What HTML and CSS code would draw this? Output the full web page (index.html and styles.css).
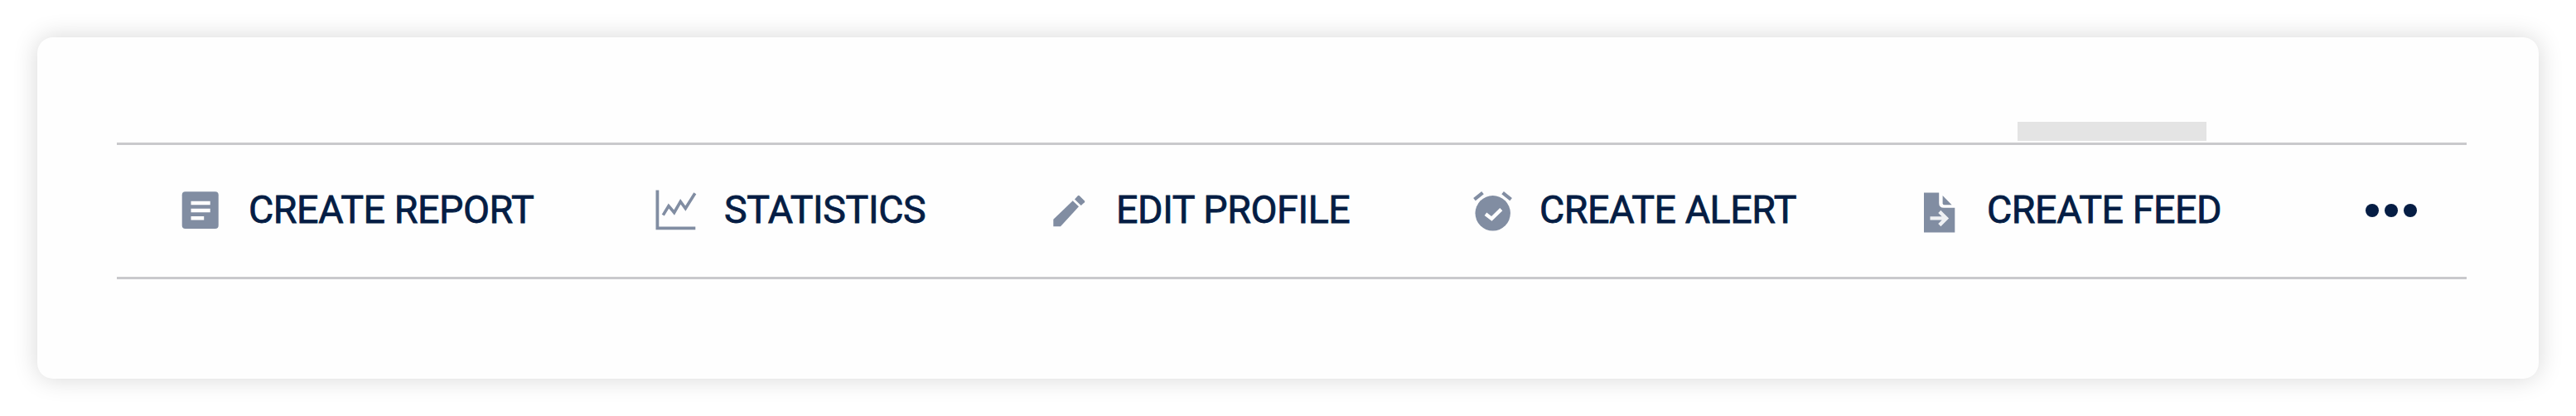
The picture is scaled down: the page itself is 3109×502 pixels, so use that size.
FILE: index.html
```html
<!DOCTYPE html>
<html lang="en">
    <head>
        <meta charset="utf-8">
        <title>Actions</title>
        <link rel="stylesheet" href="styles.css">
    </head>

    <body>

        <div class="card">
            <div class="toolbar">

                <div class="placeholder"></div>

                <div class="action report">
                    <svg class="icon" viewBox="0 0 60 60">
                        <rect x="7.7" y="7.3" width="44" height="44.7" rx="4"/>
                        <path class="cut" d="M18.5 18.7h23.2v4.5H18.5zM18.5 27.8h23.2v4.5H18.5zM18.5 37h15.7v4.5H18.5z"/>
                    </svg>
                    <span class="label">CREATE REPORT</span>
                </div>

                <div class="action statistics">
                    <svg class="icon" viewBox="0 0 60 60">
                        <path d="M9.5 5.5h3.8v44h44v3.8H9.5z"/>
                        <polyline class="line" points="18.3,35.6 25,24.5 31.7,32.5 39.3,19.3 45.3,27.5 56.8,9.2"/>
                    </svg>
                    <span class="label">STATISTICS</span>
                </div>

                <div class="action edit">
                    <svg class="icon" viewBox="0 0 60 60">
                        <path d="M9.3 40.8L32.7 18.3L40 25.3L18 49.3H9.3z"/>
                        <path d="M35 16.5L38.8 12.2Q39.8 11.2 40.8 12.2L46.8 18.2Q47.8 19.3 46.8 20.3L42.7 24z"/>
                    </svg>
                    <span class="label">EDIT PROFILE</span>
                </div>

                <div class="action alert">
                    <svg class="icon" viewBox="0 0 60 60">
                        <circle cx="29.7" cy="33.3" r="21.2"/>
                        <path class="line ear" d="M7.5 16.7L17.5 8.7M41.6 8.7L51.6 16.7"/>
                        <path class="mark" d="M21 34.3L28.3 39.9L39.8 28.6"/>
                    </svg>
                    <span class="label">CREATE ALERT</span>
                </div>

                <div class="action feed">
                    <svg class="icon" viewBox="0 0 60 60">
                        <path d="M10 8.4H28.2V21Q28.2 26.8 34 26.8H47.3V56.6H10z"/>
                        <path d="M32.6 12L43.6 23.2H34.6Q32.6 23.2 32.6 21.2z"/>
                        <path class="mark arrow" d="M17.5 39.4H37M28.8 31.4L37 39.4L28.8 47.6"/>
                    </svg>
                    <span class="label">CREATE FEED</span>
                </div>

                <div class="more">
                    <span class="dot"></span>
                    <span class="dot"></span>
                    <span class="dot"></span>
                </div>

            </div>
        </div>

    </body>
</html>
```

FILE: styles.css
```css
*{
    box-sizing: border-box;
}

body{
    margin: 0;
    padding: 45px;
    background: #fff;
    font-family: Roboto, "Liberation Sans", sans-serif;
}

.card{
    height: 412px;
    padding: 127px 87px 0 96px;
    border-radius: 19px;
    background: #fefefe;
    box-shadow: 0 0 30px rgba(0,0,0,0.16);
}

.toolbar{
    position: relative;
    display: grid;
    grid-template-columns: 570px 480px 510px 540px 544px auto;
    align-items: center;
    height: 165px;
    padding: 0 0 1px 71px;
    border-top: 3px solid #c9c9cc;
    border-bottom: 3px solid #c9c9cc;
}

/* sits just above the top rule */
.placeholder{
    position: absolute;
    left: 2294px;
    top: -28px;
    width: 228px;
    height: 23px;
    background: #e4e4e4;
}

.action{
    display: flex;
    align-items: center;
}

.icon{
    width: 60px;
    height: 60px;
    margin-right: 26px;
    fill: #818da2;
}

.report .icon{
    margin-right: 28px;
}

.statistics .icon{
    margin-right: 32px;
}

.edit .icon{
    margin-right: 25px;
}

.icon .cut{
    fill: #fff;
}

.icon .line{
    fill: none;
    stroke: #818da2;
    stroke-width: 3.6;
}

.icon .ear{
    stroke-width: 4.2;
}

.icon .mark{
    fill: none;
    stroke: #fff;
    stroke-width: 4.4;
}

.icon .arrow{
    stroke: #eef0f3;
}

.label{
    margin-bottom: 3px;
    font-size: 46.5px;
    line-height: 60px;
    letter-spacing: -0.4px;
    color: #051d44;
    -webkit-text-stroke: 0.8px #051d44;
    white-space: nowrap;
}

.more{
    display: flex;
    gap: 7px;
    margin: 0 0 1px -1px;
}

.dot{
    width: 16px;
    height: 16px;
    border-radius: 50%;
    background: #051d44;
}
```
